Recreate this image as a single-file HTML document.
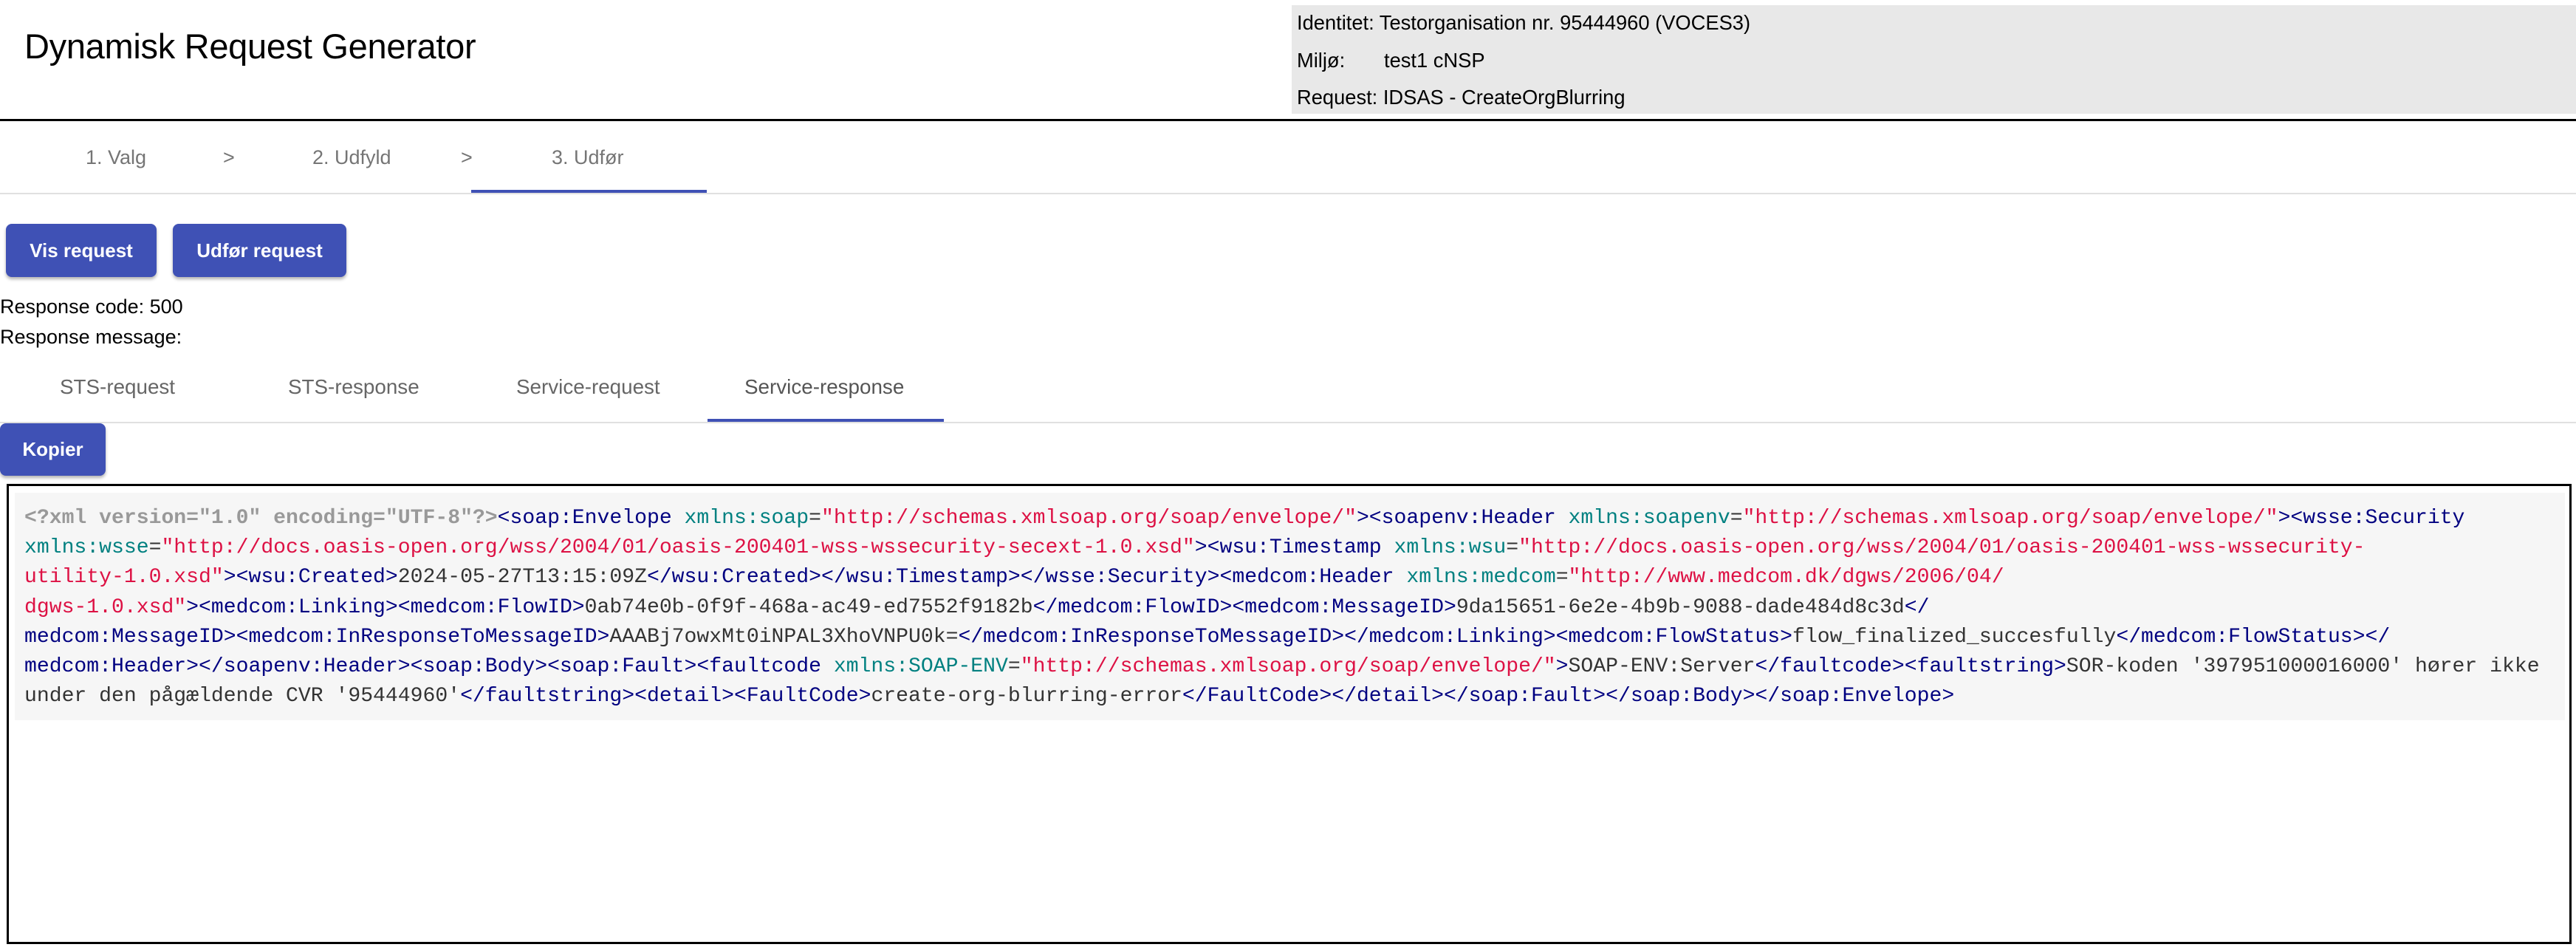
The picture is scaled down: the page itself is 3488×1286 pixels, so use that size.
<!DOCTYPE html>
<html><head><meta charset="utf-8"><style>
body{margin:0;width:3488px;height:1286px;background:#fff;font-family:"Liberation Sans",Arial,sans-serif;position:relative;overflow:hidden;color:#000}
.a{position:absolute;white-space:nowrap}
.title{left:33px;top:37px;font-size:47px;line-height:52px;letter-spacing:-0.3px}
.info{left:1749px;top:7px;width:1739px;height:147px;background:#e8e8e8}
.info div{position:absolute;left:7px;font-size:27.3px;line-height:30px}
.hr1{left:0;top:161px;width:3488px;height:3px;background:#000}
.step{font-size:27px;color:#757575;top:198px;line-height:30px}
.btn{background:#3f51b5;color:#fff;font-weight:bold;font-size:26px;border-radius:8px;box-shadow:0 3px 4px rgba(0,0,0,.3);text-align:center}
.tab{font-size:27.8px;color:#666;top:509px;line-height:30px}
pre{margin:0;font-family:"Liberation Mono","DejaVu Sans Mono",monospace;font-size:28.1px;line-height:40.2px;color:#333}
pre.a{white-space:pre}
.p{color:#999;font-weight:bold}.t{color:#000080}.n{color:#008080}.v{color:#d14}
</style></head><body>
<div class="a title">Dynamisk Request Generator</div>
<div class="a info">
<div style="top:9px">Identitet: Testorganisation nr. 95444960 (VOCES3)</div>
<div style="top:60px">Miljø:</div><div style="top:60px;left:125px">test1 cNSP</div>
<div style="top:110px">Request: IDSAS - CreateOrgBlurring</div>
</div>
<div class="a hr1"></div>
<div class="a step" style="left:116px">1. Valg</div>
<div class="a step" style="left:302px">&gt;</div>
<div class="a step" style="left:423px">2. Udfyld</div>
<div class="a step" style="left:624px">&gt;</div>
<div class="a step" style="left:747px">3. Udfør</div>
<div class="a" style="left:0;top:261px;width:3488px;height:2px;background:#e0e0e0"></div>
<div class="a" style="left:638px;top:257px;width:319px;height:4px;background:#3f51b5"></div>
<div class="a btn" style="left:8px;top:303px;width:204px;height:72px;line-height:72px">Vis request</div>
<div class="a btn" style="left:234px;top:303px;width:235px;height:72px;line-height:72px">Udfør request</div>
<div class="a" style="left:0;top:400px;font-size:27px;line-height:30px">Response code: 500</div>
<div class="a" style="left:0;top:441px;font-size:27px;line-height:30px">Response message:</div>
<div class="a tab" style="left:81px">STS-request</div>
<div class="a tab" style="left:390px">STS-response</div>
<div class="a tab" style="left:699px">Service-request</div>
<div class="a tab" style="left:1008px;color:#555">Service-response</div>
<div class="a" style="left:0;top:571px;width:3488px;height:2px;background:#e0e0e0"></div>
<div class="a" style="left:958px;top:567px;width:320px;height:4px;background:#3f51b5"></div>
<div class="a btn" style="left:0;top:573px;width:143px;height:71px;line-height:71px">Kopier</div>
<div class="a" style="left:9px;top:655px;width:3467px;height:617px;border:3px solid #000"></div>
<div class="a" style="left:20px;top:667px;width:3453px;height:308px;background:#f6f6f6"></div>
<pre class="a" style="left:33px;top:682px"><span class="p">&lt;?xml version="1.0" encoding="UTF-8"?&gt;</span><span class="t">&lt;soap:Envelope</span> <span class="n">xmlns:soap</span>=<span class="v">"http://schemas.xmlsoap.org/soap/envelope/"</span><span class="t">&gt;&lt;soapenv:Header</span> <span class="n">xmlns:soapenv</span>=<span class="v">"http://schemas.xmlsoap.org/soap/envelope/"</span><span class="t">&gt;&lt;wsse:Security</span>
<span class="n">xmlns:wsse</span>=<span class="v">"http://docs.oasis-open.org/wss/2004/01/oasis-200401-wss-wssecurity-secext-1.0.xsd"</span><span class="t">&gt;&lt;wsu:Timestamp</span> <span class="n">xmlns:wsu</span>=<span class="v">"http://docs.oasis-open.org/wss/2004/01/oasis-200401-wss-wssecurity-</span>
<span class="v">utility-1.0.xsd"</span><span class="t">&gt;&lt;wsu:Created&gt;</span>2024-05-27T13:15:09Z<span class="t">&lt;/wsu:Created&gt;&lt;/wsu:Timestamp&gt;&lt;/wsse:Security&gt;&lt;medcom:Header</span> <span class="n">xmlns:medcom</span>=<span class="v">"http://www.medcom.dk/dgws/2006/04/</span>
<span class="v">dgws-1.0.xsd"</span><span class="t">&gt;&lt;medcom:Linking&gt;&lt;medcom:FlowID&gt;</span>0ab74e0b-0f9f-468a-ac49-ed7552f9182b<span class="t">&lt;/medcom:FlowID&gt;&lt;medcom:MessageID&gt;</span>9da15651-6e2e-4b9b-9088-dade484d8c3d<span class="t">&lt;/</span>
<span class="t">medcom:MessageID&gt;&lt;medcom:InResponseToMessageID&gt;</span>AAABj7owxMt0iNPAL3XhoVNPU0k=<span class="t">&lt;/medcom:InResponseToMessageID&gt;&lt;/medcom:Linking&gt;&lt;medcom:FlowStatus&gt;</span>flow_finalized_succesfully<span class="t">&lt;/medcom:FlowStatus&gt;&lt;/</span>
<span class="t">medcom:Header&gt;&lt;/soapenv:Header&gt;&lt;soap:Body&gt;&lt;soap:Fault&gt;&lt;faultcode</span> <span class="n">xmlns:SOAP-ENV</span>=<span class="v">"http://schemas.xmlsoap.org/soap/envelope/"</span><span class="t">&gt;</span>SOAP-ENV:Server<span class="t">&lt;/faultcode&gt;&lt;faultstring&gt;</span>SOR-koden '397951000016000' hører ikke
under den pågældende CVR '95444960'<span class="t">&lt;/faultstring&gt;&lt;detail&gt;&lt;FaultCode&gt;</span>create-org-blurring-error<span class="t">&lt;/FaultCode&gt;&lt;/detail&gt;&lt;/soap:Fault&gt;&lt;/soap:Body&gt;&lt;/soap:Envelope&gt;</span></pre>
</body></html>
